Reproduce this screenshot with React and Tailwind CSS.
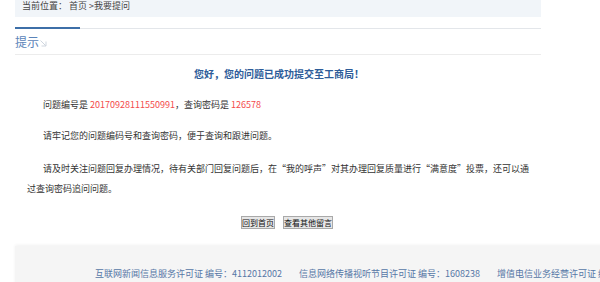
export default function App() {
  const font = { fontFamily: '"Noto Sans CJK SC", "Noto Sans", sans-serif' };

  return (
    <div className="w-[600px] h-[282px] overflow-hidden bg-white" style={font}>
      <div className="ml-[15px] w-[526px]">
        {/* Breadcrumb */}
        <div className="h-[17px] bg-[#f1f5f9] pl-[7px] text-[9px] leading-[12px] text-[#444]">
          当前位置： 首页 &gt;我要提问
        </div>

        {/* Tab header */}
        <div className="mt-[10px] flex h-[2px]">
          <div className="w-[65px] bg-[#3d6fa8]" />
          <div className="flex-1 mt-[1px] h-[1px] bg-[#e3e6ea]" />
        </div>
        <div className="flex h-[26px] items-center border-b border-[#ececec]">
          <span className="text-[12px] text-[#5b84b9]">提示</span>
          <svg width="7" height="7" viewBox="0 0 7 7" className="ml-[1px] mt-[4px]">
            <path d="M0.5 0.5 L6 6 M6 1.5 V6 H1.5" stroke="#cfd6df" strokeWidth="1" fill="none" />
          </svg>
        </div>

        {/* Content */}
        <div className="pt-[12px] text-[9px] text-[#333]">
          <div className="text-center text-[10px] font-bold text-[#2d5c99] leading-[14px] pl-[2px]">
            您好，您的问题已成功提交至工商局！
          </div>
          <div className="mt-[14px] pl-[12px] pr-[2px] leading-[20px]">
            <p className="indent-[16px]">
              问题编号是 <span className="text-[#f44a4a]">20170928111550991</span>，查询密码是{" "}
              <span className="text-[#f44a4a]">126578</span>
            </p>
            <p className="mt-[11px] indent-[16px]">请牢记您的问题编码号和查询密码，便于查询和跟进问题。</p>
            <p className="mt-[13px] indent-[16px]">
              请及时关注问题回复办理情况，待有关部门回复问题后，在“我的呼声”对其办理回复质量进行“满意度”投票，还可以通
              <br />
              过查询密码追问问题。
            </p>
          </div>
          <div className="mt-[17px] flex justify-center gap-[8px] pl-[18px]">
            <button className="h-[13px] px-0 bg-[#e6e6e6] border border-[#a9a9a9] text-[8px] leading-[11px] text-[#111]">
              回到首页
            </button>
            <button className="h-[13px] px-0 bg-[#e6e6e6] border border-[#a9a9a9] text-[8px] leading-[11px] text-[#111]">
              查看其他留言
            </button>
          </div>
        </div>
      </div>

      {/* Footer */}
      <div className="mt-[17px] ml-[15px] w-[1000px] h-[40px] bg-[#f5f5f5] shadow-[0_-1px_3px_rgba(0,0,0,0.06)]">
        <div className="flex gap-[17px] pl-[80px] pt-[22px] text-[9px] leading-[12px] text-[#5677a6] whitespace-nowrap">
          <span>互联网新闻信息服务许可证 编号：4112012002</span>
          <span>信息网络传播视听节目许可证 编号：1608238</span>
          <span>增值电信业务经营许可证 编号：豫B2-20040012</span>
        </div>
      </div>
    </div>
  );
}
